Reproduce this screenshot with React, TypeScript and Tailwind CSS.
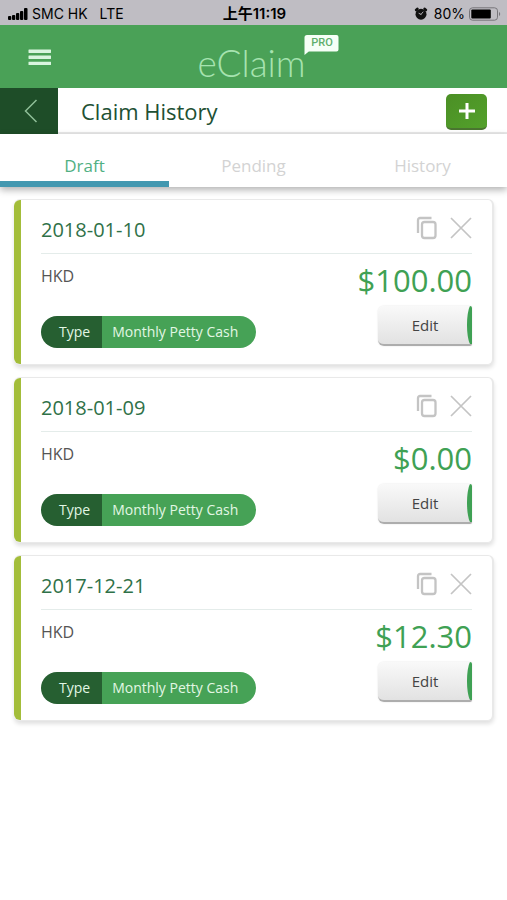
import React, { useState } from "react";

interface Claim {
  id: string;
  date: string;
  currency: string;
  amount: string;
  type: string;
}

const CLAIMS: Claim[] = [
  { id: "claim-1", date: "2018-01-10", currency: "HKD", amount: "$100.00", type: "Monthly Petty Cash" },
  { id: "claim-2", date: "2018-01-09", currency: "HKD", amount: "$0.00", type: "Monthly Petty Cash" },
  { id: "claim-3", date: "2017-12-21", currency: "HKD", amount: "$12.30", type: "Monthly Petty Cash" },
];

const TABS = ["Draft", "Pending", "History"];

function StatusBar() {
  return (
    <div className="grid grid-cols-3 items-center h-[25px] pt-0.5 pl-2 pr-1.5 bg-[#bfbdc3] text-black text-sm font-['Inter','Noto_Sans_CJK_TC',sans-serif]">
      <div className="flex items-center whitespace-nowrap">
        <svg viewBox="0 0 20 12" className="w-5 h-3 mr-1" fill="currentColor">
          <rect x="0" y="8" width="3.3" height="4" rx="1" />
          <rect x="4" y="7" width="3.3" height="5" rx="1" />
          <rect x="8" y="5" width="3.3" height="7" rx="1" />
          <rect x="12" y="3" width="3.3" height="9" rx="1" />
          <rect x="16" y="0" width="3.5" height="12" rx="1" />
        </svg>
        <span>SMC HK</span>
        <span className="ml-3">LTE</span>
      </div>
      <div className="text-center text-[15px] font-semibold whitespace-nowrap">上午11:19</div>
      <div className="flex items-center justify-end whitespace-nowrap">
        <svg viewBox="0 0 14 14" className="w-3.5 h-3.5 mr-1.5" fill="none">
          <circle cx="7" cy="7.2" r="5.5" fill="#111" />
          <path d="M2 3 3.500 1.800M12 3l-1.500-1.200" stroke="#111" strokeWidth="2.4" strokeLinecap="round" />
          <path d="M7 7.400 5 6.400M7 7.400l2-2.400" stroke="#bfbdc3" strokeWidth="0.9" strokeLinecap="round" />
        </svg>
        <span>80%</span>
        <svg viewBox="0 0 32 14" className="w-8 h-3.5 ml-1" fill="none">
          <rect x="0.5" y="0.8" width="28" height="12.4" rx="3" stroke="#77757a" />
          <rect x="2.3" y="2.6" width="19.5" height="8.8" rx="1" fill="#000" />
          <path d="M30 5v4c1.6-.6 1.6-3.4 0-4Z" fill="#77757a" />
        </svg>
      </div>
    </div>
  );
}

function Header() {
  return (
    <header className="relative flex items-center justify-center h-[63px] pr-1 bg-[#4aa157]">
      <button aria-label="Menu" className="absolute left-7 top-6 cursor-pointer">
        <svg viewBox="0 0 24 17" className="w-6 h-[17px]" fill="#d9f5df">
          <rect x="0.5" y="0.5" width="22.5" height="3.4" rx="0.4" />
          <rect x="0.5" y="6.6" width="22.5" height="3.4" rx="0.4" />
          <rect x="0.5" y="12.7" width="22.5" height="3.4" rx="0.4" />
        </svg>
      </button>
      <div className="relative pt-3 text-[37px] leading-10 font-light font-['Lato',sans-serif] text-[#a6e3b0]">
        eClaim
        {/* PRO speech bubble */}
        <div className="absolute left-full bottom-full -ml-0.5 -mb-6 h-5 w-[35px]">
          <svg viewBox="0 0 35 20" className="absolute inset-0 w-full h-full" fill="#f6fff7">
            <path d="M3 0h29.500a2 2 0 0 1 2 2v12.500a2 2 0 0 1-2 2H4.800L0.500 20V2.500A2.500 2.500 0 0 1 3 0Z" />
          </svg>
          <span className="relative block pl-0.5 text-center text-[11px] leading-4 font-medium font-['Roboto',sans-serif] text-[#5fae6b]">
            PRO
          </span>
        </div>
      </div>
    </header>
  );
}

function ClaimCard({ claim }: { claim: Claim }) {
  return (
    <article className="rounded-md border-y border-r-2 border-[#e9e9e9] bg-white shadow-[0_3px_4px_rgba(0,0,0,0.12)]">
      <div className="rounded-l-md border-l-[7px] border-[#a3bd3a] px-5 pb-4">
        <div className="flex items-center justify-between h-[54px] pt-1.5 border-b border-[#e4ecea]">
          <h2 className="text-xl text-[#2f7148]">{claim.date}</h2>
          <div className="flex items-center gap-3 pb-1">
            <button aria-label="Copy claim" className="cursor-pointer">
              <svg viewBox="0 0 22 24" className="w-[22px] h-6" fill="none" stroke="#c4c4c4" strokeWidth="2.3">
                <rect x="6" y="6" width="13.500" height="16" rx="2.500" />
                <path d="M2 17V4a2 2 0 0 1 2-2H15.500" />
              </svg>
            </button>
            <button aria-label="Delete claim" className="cursor-pointer">
              <svg viewBox="0 0 22 22" className="w-[22px] h-[22px]" fill="none" stroke="#c4c4c4" strokeWidth="1.7">
                <path d="M1 1l20 20M21 1 1 21" />
              </svg>
            </button>
          </div>
        </div>
        <div className="flex justify-between pt-2">
          <div className="flex flex-col justify-between items-start pt-1">
            <span className="text-base leading-5 text-[#555]">{claim.currency}</span>
            <div className="flex h-8 rounded-full overflow-hidden text-sm leading-8 text-[#e2f7e4]">
              <span className="pl-[18px] pr-3 bg-[#265f31]">Type</span>
              <span className="pl-2.5 pr-[18px] bg-[#46a256]">{claim.type}</span>
            </div>
          </div>
          <div className="flex flex-col items-end">
            <span className="text-[31px] leading-9 text-[#3fa154]">{claim.amount}</span>
            <button className="relative w-[94px] h-10 mt-2 mb-0.5 rounded-l-md rounded-r-xs overflow-hidden border-b-2 border-[#adadad] bg-linear-to-b from-[#f9f9f9] to-[#e2e2e2] text-[15px] text-[#444] shadow-[0_0_2px_rgba(0,0,0,0.12)] cursor-pointer">
              Edit
              <svg viewBox="0 0 6 40" preserveAspectRatio="none" className="absolute right-0 top-0 w-1.5 h-full" fill="#3fa154">
                <path d="M6 0H4C0 8 0 32 4 40h2Z" />
              </svg>
            </button>
          </div>
        </div>
      </div>
    </article>
  );
}

export default function App() {
  const [activeTab, setActiveTab] = useState("Draft");

  return (
    <div className="min-h-screen bg-white font-['Open_Sans',sans-serif]">
      <StatusBar />
      <Header />

      {/* Title bar */}
      <div className="flex items-stretch h-[46px] border-b-2 border-[#e9e9e9] bg-white">
        <button aria-label="Back" className="flex items-center justify-center w-[58px] -mb-0.5 pl-1 bg-[#1e4d28] cursor-pointer">
          <svg viewBox="0 0 14 24" className="w-3.5 h-6" fill="none" stroke="#8fbf98" strokeWidth="1.5">
            <path d="M12.500 1 1.500 12l11 11" />
          </svg>
        </button>
        <h1 className="flex-1 pl-[23px] text-[22px] leading-[46px] text-[#215033]">Claim History</h1>
        <button
          aria-label="Add claim"
          className="flex items-center justify-center self-end w-[41px] h-9 mb-0.5 mr-5 rounded-[5px] border-b-2 border-[#4a7530] bg-linear-to-br from-[#4b8f25] to-[#53a12b] cursor-pointer"
        >
          <svg viewBox="0 0 16 16" className="w-4 h-4" stroke="#fff" strokeWidth="3">
            <path d="M8 0v16M0 8h16" />
          </svg>
        </button>
      </div>

      <div role="tablist" className="relative grid grid-cols-3 h-[53px] bg-white shadow-[0_3px_7px_rgba(0,0,0,0.3)]">
        {TABS.map((tab) => (
          <button
            key={tab}
            role="tab"
            aria-selected={tab === activeTab}
            onClick={() => setActiveTab(tab)}
            className={`pt-4 border-b-[6px] text-[17px] cursor-pointer ${
              tab === activeTab ? "border-[#4398b0] text-[#51b083]" : "border-transparent text-[#d3d3d3]"
            }`}
          >
            {tab}
          </button>
        ))}
      </div>

      <main className="flex flex-col gap-3 pl-3.5 pr-[13px] pt-3 pb-6">
        {CLAIMS.map((claim) => (
          <ClaimCard key={claim.id} claim={claim} />
        ))}
      </main>
    </div>
  );
}
